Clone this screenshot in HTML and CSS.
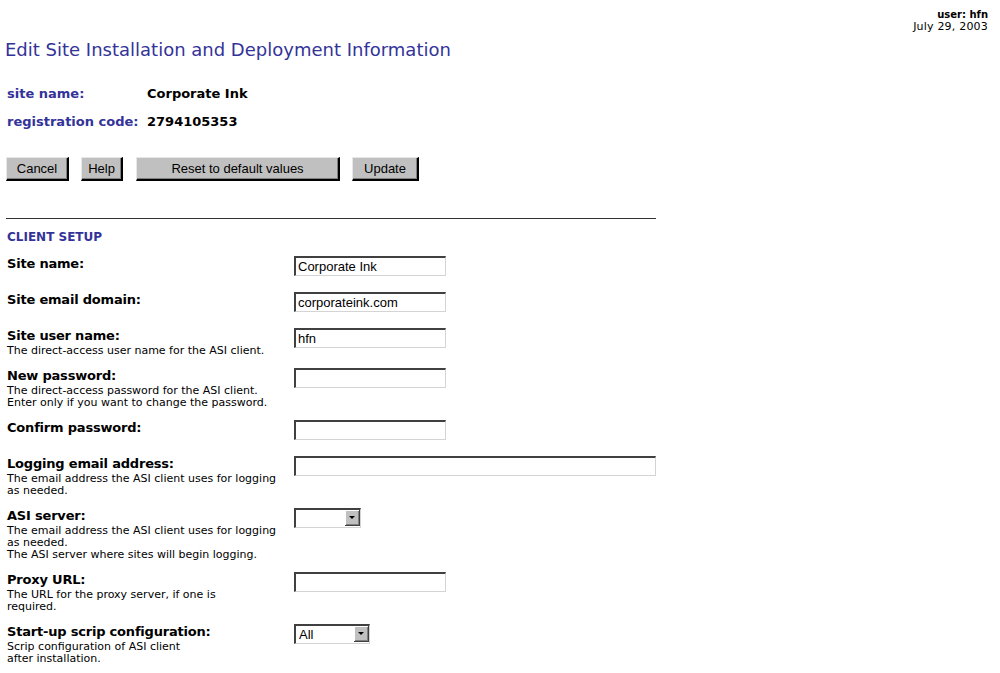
FILE: index.html
```html
<!DOCTYPE html>
<html>
<head>
<meta charset="utf-8">
<title>Edit Site Installation and Deployment Information</title>
<link rel="stylesheet" href="styles.css">
</head>
<body>
<div class="page">
  <div class="userinfo">
    <div class="user">user: hfn</div>
    <div class="date">July 29, 2003</div>
  </div>
  <h1 class="title">Edit Site Installation and Deployment Information</h1>

  <div class="summary">
    <div class="sum-row"><span class="sum-label">site name:</span><span class="sum-value">Corporate Ink</span></div>
    <div class="sum-row"><span class="sum-label">registration code:</span><span class="sum-value">2794105353</span></div>
  </div>

  <div class="buttons">
    <button class="btn btn-cancel">Cancel</button>
    <button class="btn btn-help">Help</button>
    <button class="btn btn-reset">Reset to default values</button>
    <button class="btn btn-update">Update</button>
  </div>

  <div class="rule"></div>
  <div class="section">CLIENT SETUP</div>

  <div class="form">
    <div class="row">
      <div class="label"><div class="name">Site name:</div></div>
      <div class="field"><input class="text" type="text" value="Corporate Ink"></div>
    </div>
    <div class="row">
      <div class="label"><div class="name">Site email domain:</div></div>
      <div class="field"><input class="text" type="text" value="corporateink.com"></div>
    </div>
    <div class="row">
      <div class="label"><div class="name">Site user name:</div><div class="desc">The direct-access user name for the ASI client.</div></div>
      <div class="field"><input class="text" type="text" value="hfn"></div>
    </div>
    <div class="row">
      <div class="label"><div class="name">New password:</div><div class="desc">The direct-access password for the ASI client.<br>Enter only if you want to change the password.</div></div>
      <div class="field"><input class="text" type="password" value=""></div>
    </div>
    <div class="row">
      <div class="label"><div class="name">Confirm password:</div></div>
      <div class="field"><input class="text" type="password" value=""></div>
    </div>
    <div class="row">
      <div class="label"><div class="name">Logging email address:</div><div class="desc">The email address the ASI client uses for logging<br>as needed.</div></div>
      <div class="field"><input class="text text-wide" type="text" value=""></div>
    </div>
    <div class="row">
      <div class="label"><div class="name">ASI server:</div><div class="desc">The email address the ASI client uses for logging<br>as needed.<br>The ASI server where sites will begin logging.</div></div>
      <div class="field"><span class="select select-server"><select><option></option></select><span class="arrow"></span></span></div>
    </div>
    <div class="row">
      <div class="label"><div class="name">Proxy URL:</div><div class="desc">The URL for the proxy server, if one is<br>required.</div></div>
      <div class="field"><input class="text" type="text" value=""></div>
    </div>
    <div class="row">
      <div class="label"><div class="name">Start-up scrip configuration:</div><div class="desc">Scrip configuration of ASI client<br>after installation.</div></div>
      <div class="field"><span class="select select-all"><select><option>All</option></select><span class="arrow"></span></span></div>
    </div>
  </div>
</div>
</body>
</html>
```

FILE: styles.css
```css
html, body {
  margin: 0;
  padding: 0;
  background: #ffffff;
}

.page {
  font-family: "DejaVu Sans", Verdana, sans-serif;
  color: #000;
  padding: 0 12px 0 5px;
}

.userinfo {
  text-align: right;
  font-size: 10px;
  line-height: 12px;
  padding-top: 9px;
}
.user { font-weight: bold; }
.date { font-size: 11px; letter-spacing: 0.2px; }

.title {
  margin: 6px 0 0 0;
  font-size: 18px;
  line-height: 22px;
  font-weight: normal;
  color: #333399;
}

.summary {
  margin-top: 25px;
  padding-left: 2px;
}
.sum-row {
  display: flex;
  height: 28px;
  align-items: flex-start;
  font-size: 13px;
  line-height: 16px;
  font-weight: bold;
}
.sum-label { color: #333399; width: 140px; }
.sum-value { color: #000; }

.buttons {
  display: flex;
  gap: 12px;
  margin-top: 15px;
  padding-left: 1px;
}
.btn {
  font-family: "Liberation Sans", Arial, sans-serif;
  font-size: 13px;
  height: 24px;
  padding: 0;
  background: #c0c0c0;
  color: #000;
  border-style: solid;
  border-width: 1px 2px 2px 1px;
  border-color: #e8e8e8 #000 #000 #e8e8e8;
  box-shadow: inset -1px -1px 0 #808080;
  text-align: center;
}
.btn-cancel { width: 63px; }
.btn-help { width: 42px; }
.btn-reset { width: 204px; margin-left: 1px; }
.btn-update { width: 67px; }

.rule {
  margin-top: 37px;
  margin-left: 1px;
  width: 650px;
  height: 1px;
  background: #333;
}

.section {
  margin-top: 11px;
  padding-left: 2px;
  color: #333399;
  font-weight: bold;
  font-size: 12px;
  line-height: 15px;
}

.form {
  margin-top: 11px;
  padding-left: 2px;
}
.row {
  display: flex;
  padding-bottom: 11px;
}
.label {
  width: 287px;
  flex: none;
}
.name {
  font-size: 13px;
  font-weight: bold;
  line-height: 15px;
  letter-spacing: -0.2px;
}
.desc {
  font-size: 11px;
  line-height: 12px;
  padding-top: 2px;
}
.field {
  min-height: 25px;
}

.text {
  box-sizing: border-box;
  display: block;
  width: 152px;
  height: 20px;
  margin: 0;
  padding: 0 2px;
  font-family: "Liberation Sans", Arial, sans-serif;
  font-size: 13px;
  color: #000;
  background: #fff;
  border-style: solid;
  border-width: 2px 1px 1px 2px;
  border-color: #404040 #d4d4d4 #d4d4d4 #404040;
  outline: none;
}
.text-wide { width: 362px; }

.select {
  position: relative;
  display: block;
  height: 20px;
}
.select select {
  appearance: none;
  -webkit-appearance: none;
  box-sizing: border-box;
  display: block;
  height: 20px;
  width: 100%;
  margin: 0;
  padding: 0 0 0 3px;
  font-family: "Liberation Sans", Arial, sans-serif;
  font-size: 13px;
  color: #000;
  background: #fff;
  border-style: solid;
  border-width: 2px 1px 1px 2px;
  border-color: #404040 #d4d4d4 #d4d4d4 #404040;
  border-radius: 0;
  outline: none;
}
.select-server { width: 67px; }
.select-all { width: 76px; }
.arrow {
  position: absolute;
  right: 1px;
  top: 2px;
  width: 15px;
  height: 16px;
  box-sizing: border-box;
  background: #c0c0c0;
  border-right: 1px solid #404040;
  border-bottom: 1px solid #404040;
  box-shadow: inset 1px 1px 0 #fff, inset -1px -1px 0 #808080;
}
.arrow::after {
  content: "";
  position: absolute;
  left: 4px;
  top: 6px;
  border-left: 3px solid transparent;
  border-right: 3px solid transparent;
  border-top: 3px solid #000;
}
```
